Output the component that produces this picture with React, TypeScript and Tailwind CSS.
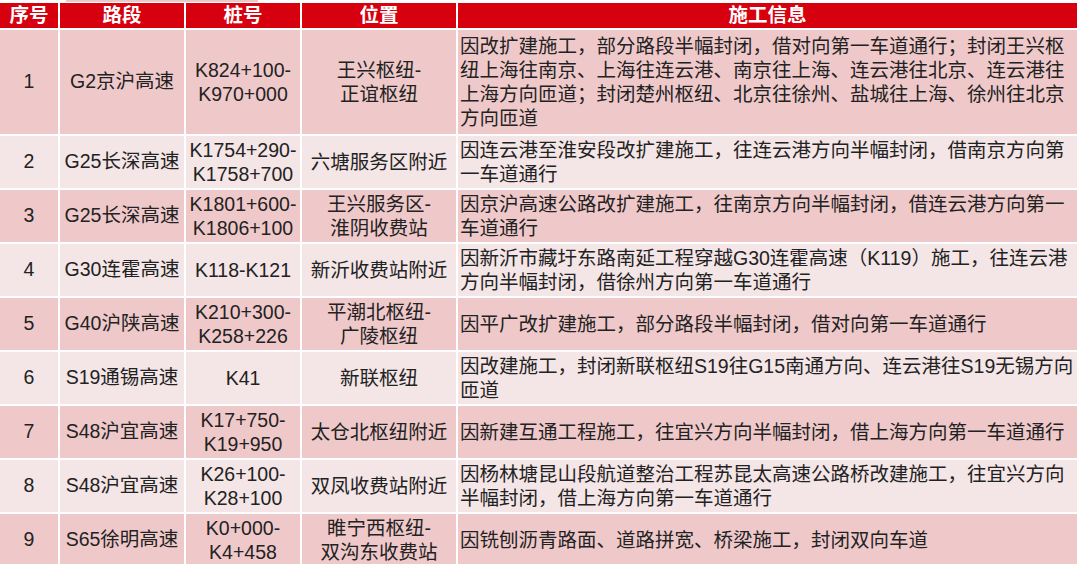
import React from 'react';

interface Row {
  no: string;
  road: string;
  stake: string[];
  place: string[];
  info: string;
}

const rows: Row[] = [
  {
    no: '1',
    road: 'G2京沪高速',
    stake: ['K824+100-', 'K970+000'],
    place: ['王兴枢纽-', '正谊枢纽'],
    info: '因改扩建施工，部分路段半幅封闭，借对向第一车道通行；封闭王兴枢纽上海往南京、上海往连云港、南京往上海、连云港往北京、连云港往上海方向匝道；封闭楚州枢纽、北京往徐州、盐城往上海、徐州往北京方向匝道',
  },
  {
    no: '2',
    road: 'G25长深高速',
    stake: ['K1754+290-', 'K1758+700'],
    place: ['六塘服务区附近'],
    info: '因连云港至淮安段改扩建施工，往连云港方向半幅封闭，借南京方向第一车道通行',
  },
  {
    no: '3',
    road: 'G25长深高速',
    stake: ['K1801+600-', 'K1806+100'],
    place: ['王兴服务区-', '淮阴收费站'],
    info: '因京沪高速公路改扩建施工，往南京方向半幅封闭，借连云港方向第一车道通行',
  },
  {
    no: '4',
    road: 'G30连霍高速',
    stake: ['K118-K121'],
    place: ['新沂收费站附近'],
    info: '因新沂市藏圩东路南延工程穿越G30连霍高速（K119）施工，往连云港方向半幅封闭，借徐州方向第一车道通行',
  },
  {
    no: '5',
    road: 'G40沪陕高速',
    stake: ['K210+300-', 'K258+226'],
    place: ['平潮北枢纽-', '广陵枢纽'],
    info: '因平广改扩建施工，部分路段半幅封闭，借对向第一车道通行',
  },
  {
    no: '6',
    road: 'S19通锡高速',
    stake: ['K41'],
    place: ['新联枢纽'],
    info: '因改建施工，封闭新联枢纽S19往G15南通方向、连云港往S19无锡方向\n匝道',
  },
  {
    no: '7',
    road: 'S48沪宜高速',
    stake: ['K17+750-', 'K19+950'],
    place: ['太仓北枢纽附近'],
    info: '因新建互通工程施工，往宜兴方向半幅封闭，借上海方向第一车道通行',
  },
  {
    no: '8',
    road: 'S48沪宜高速',
    stake: ['K26+100-', 'K28+100'],
    place: ['双凤收费站附近'],
    info: '因杨林塘昆山段航道整治工程苏昆太高速公路桥改建施工，往宜兴方向半幅封闭，借上海方向第一车道通行',
  },
  {
    no: '9',
    road: 'S65徐明高速',
    stake: ['K0+000-', 'K4+458'],
    place: ['睢宁西枢纽-', '双沟东收费站'],
    info: '因铣刨沥青路面、道路拼宽、桥梁施工，封闭双向车道',
  },
];

const headers = ['序号', '路段', '桩号', '位置', '施工信息'];

const App: React.FC = () => {
  return (
    <div
      className="w-[1080px] h-[564px] overflow-hidden bg-white text-[#222222]"
      style={{ fontFamily: '"Liberation Sans", "Noto Sans CJK SC", sans-serif' }}
    >
      {/* faint strip above the header */}
      <div className="h-[3px] flex">
        <div className="ml-[66px] w-[192px] h-[2px] bg-[#e9c9c9]" />
      </div>

      <div className="w-[1077px] grid grid-cols-[58px_124px_114px_154px_1fr] gap-[2px] bg-white">
        {headers.map((h) => (
          <div
            key={h}
            className="h-[25px] bg-[#d7000f] text-white font-bold text-[19.5px] leading-[25px] flex items-center justify-center"
          >
            {h}
          </div>
        ))}

        {rows.map((r, i) => {
          const bg = i % 2 === 0 ? 'bg-[#efc9ca]' : 'bg-[#f4e5e6]';
          const h = i === 0 ? 'h-[104px]' : 'h-[52px]';
          return (
            <React.Fragment key={r.no}>
              <div className={`${bg} ${h} flex items-center justify-center text-[19.5px]`}>{r.no}</div>
              <div className={`${bg} ${h} flex items-center justify-center text-[19.5px] whitespace-nowrap`}>
                {r.road}
              </div>
              <div className={`${bg} ${h} flex flex-col items-center justify-center text-[19.5px] leading-[24px] whitespace-nowrap`}>
                {r.stake.map((s) => (
                  <span key={s}>{s}</span>
                ))}
              </div>
              <div className={`${bg} ${h} flex flex-col items-center justify-center text-[19.5px] leading-[24px] whitespace-nowrap`}>
                {r.place.map((s) => (
                  <span key={s}>{s}</span>
                ))}
              </div>
              <div className={`${bg} ${h} flex items-center pl-[2px] pr-[2px] text-[19.5px] leading-[24px]`}>
                <p className="whitespace-pre-line">{r.info}</p>
              </div>
            </React.Fragment>
          );
        })}
      </div>
    </div>
  );
};

export default App;
